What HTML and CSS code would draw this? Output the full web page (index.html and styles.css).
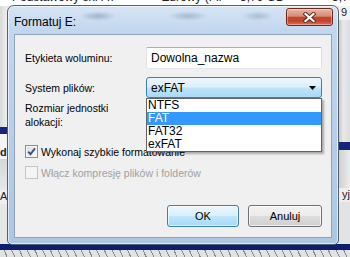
FILE: index.html
```html
<!DOCTYPE html>
<html lang="pl">
<head>
    <meta charset="UTF-8">
    <title>Formatuj E:</title>
    <link rel="stylesheet" href="styles.css">
</head>
<body>
    <div class="desk">
        <div class="desk-top">
            <div class="desk-row">
                <span class="cell c1">Podstawowy</span>
                <span class="cell c2">exFAT</span>
                <span class="cell c3">Zdrowy (Fil</span>
                <span class="cell c4">3,79 GB</span>
                <span class="cell c5">3,7</span>
            </div>
        </div>
        <div class="desk-mid">
            <div class="side side-left">
                <div class="seg seg-light"></div>
                <div class="seg seg-navy"></div>
                <div class="seg seg-white"></div>
                <div class="seg seg-bold">d</div>
                <div class="seg seg-grey"></div>
                <div class="seg seg-text">A</div>
                <div class="seg seg-grey2"></div>
            </div>
            <div class="side side-right">
                <div class="seg seg-nine">9</div>
                <div class="seg seg-rgrey"></div>
                <div class="seg seg-rnavy"></div>
                <div class="seg seg-rgrey2"></div>
                <div class="seg seg-yj">yj</div>
                <div class="seg seg-rgrey3"></div>
            </div>
        </div>
        <div class="desk-navy"></div>
        <div class="desk-hatch"></div>
    </div>

    <div class="window">
        <div class="titlebar">
            <span class="title">Formatuj E:</span>
            <button class="close-btn" aria-label="Zamknij">
                <svg width="13" height="11" viewBox="0 0 13 11">
                    <path d="M2.5 2 L10.5 9 M10.5 2 L2.5 9" stroke="#5a2a20" stroke-width="4" stroke-linecap="square"/>
                    <path d="M2.5 2 L10.5 9 M10.5 2 L2.5 9" stroke="#fff" stroke-width="2.2" stroke-linecap="square"/>
                </svg>
            </button>
        </div>

        <div class="panel">
            <div class="form-grid">
                <label class="lbl">Etykieta woluminu:</label>
                <div class="textbox">Dowolna_nazwa</div>

                <label class="lbl">System plików:</label>
                <div class="combo-cell">
                    <div class="combo combo-active">
                        <span>exFAT</span>
                        <svg width="7" height="4" viewBox="0 0 7 4"><path d="M0 0 H7 L3.5 4 Z" fill="#000"/></svg>
                    </div>
                    <ul class="droplist">
                        <li>NTFS</li>
                        <li class="selected">FAT</li>
                        <li>FAT32</li>
                        <li>exFAT</li>
                    </ul>
                </div>

                <label class="lbl lbl-two">Rozmiar jednostki<br>alokacji:</label>
                <div class="combo combo-plain">
                    <span>4096 bajtów</span>
                </div>
            </div>

            <div class="check-row">
                <span class="checkbox">
                    <svg width="11" height="11" viewBox="0 0 11 11"><path d="M2.2 5.6 L4.5 8.2 L9 2.4" stroke="#3c5088" stroke-width="1.9" fill="none"/></svg>
                </span>
                <span class="check-label">Wykonaj szybkie formatowanie</span>
            </div>
            <div class="check-row check-row-disabled">
                <span class="checkbox checkbox-disabled"></span>
                <span class="check-label">Włącz kompresję plików i folderów</span>
            </div>

            <div class="buttons">
                <button class="btn btn-default">OK</button>
                <button class="btn">Anuluj</button>
            </div>
        </div>
    </div>
</body>
</html>
```

FILE: styles.css
```css
* {
    box-sizing: border-box;
}
body {
    margin: 0;
    width: 350px;
    height: 257px;
    overflow: hidden;
    position: relative;
    font-family: "Liberation Sans", Arial, sans-serif;
    background-color: #e4e4e4;
}

/* explorer window behind the dialog */
.desk-top {
    height: 6px;
    background-color: #fff;
    overflow: hidden;
    font-size: 12px;
    line-height: 12px;
    color: #222;
    white-space: nowrap;
}
.desk-row {
    display: flex;
    margin-top: -9px;
}
.c1 { margin-left: 12px; width: 70px; }
.c2 { width: 80px; }
.c3 { width: 78px; }
.c4 { width: 92px; }
.desk-mid {
    height: 238px;
    display: flex;
    justify-content: space-between;
}
.side {
    display: flex;
    flex-direction: column;
    font-size: 11px;
    line-height: 12px;
    color: #222;
    overflow: hidden;
}
.side-left { width: 7px; }
.side-right { width: 11px; }
.seg-light { height: 121px; background: linear-gradient(90deg, #d9d9d9, #eeeeee); }
.seg-navy { height: 7px; background-color: #17237c; }
.seg-white { height: 12px; background-color: #f4f4f4; }
.seg-bold { height: 13px; font-weight: bold; background-color: #f4f4f4; }
.seg-grey { height: 31px; background: linear-gradient(180deg, #d6d6d6, #e8e8e8); }
.seg-text { height: 14px; background-color: #eee; }
.seg-grey2 { flex: 1; background-color: #e6e6e6; }
.seg-nine { height: 14px; background-color: #f3f3f3; padding-left: 2px; }
.seg-rgrey { height: 122px; background: linear-gradient(90deg, #c9c9c9, #e9e9e9 40%, #dcdcdc); }
.seg-rnavy { height: 8px; background-color: #17237c; }
.seg-rgrey2 { height: 38px; background: linear-gradient(90deg, #d0d0d0, #ececec); }
.seg-yj { height: 14px; background-color: #efefef; padding-left: 3px; }
.seg-rgrey3 { flex: 1; background-color: #e3e3e3; }
.desk-navy {
    height: 6px;
    background-color: #0f1d6e;
}
.desk-hatch {
    height: 7px;
    background: repeating-linear-gradient(65deg, #e2e2e2 0 6px, #8a8a8a 6px 7px);
}

/* dialog */
.window {
    position: absolute;
    left: 7px;
    top: 5px;
    width: 332px;
    height: 240px;
    border: 1px solid #4f6078;
    border-radius: 7px 7px 5px 5px;
    background:
        radial-gradient(ellipse 18px 5px at 90px 10px, rgba(80, 100, 130, 0.35), transparent),
        radial-gradient(ellipse 20px 5px at 180px 10px, rgba(80, 100, 130, 0.3), transparent),
        radial-gradient(ellipse 16px 5px at 250px 10px, rgba(80, 100, 130, 0.28), transparent),
        linear-gradient(180deg, #d6e5f4 0%, #c2d7ee 10%, #b9cfe8 50%, #adc6e1 100%);
    box-shadow: inset 0 0 0 1px rgba(255, 255, 255, 0.6);
    padding: 0 6px 6px;
    display: flex;
    flex-direction: column;
}
.titlebar {
    height: 28px;
    display: flex;
    justify-content: space-between;
    align-items: flex-start;
}
.title {
    font-size: 12px;
    line-height: 14px;
    margin-top: 9px;
    color: #000;
}
.close-btn {
    width: 47px;
    height: 18px;
    margin: 2px -1px 0 0;
    padding: 0;
    border: 1px solid #6b2a1e;
    border-radius: 3px;
    background: linear-gradient(180deg, #eab4a6 0%, #d98a74 45%, #c4472b 52%, #c2432a 75%, #d8745a 100%);
    box-shadow: inset 0 0 0 1px rgba(255, 255, 255, 0.35);
    display: flex;
    align-items: center;
    justify-content: center;
}
.panel {
    flex: 1;
    border: 1px solid #8da2bb;
    background-color: #f0f0f0;
    padding: 12px 9px 0 10px;
    font-size: 10.5px;
    color: #000;
}

.form-grid {
    display: grid;
    grid-template-columns: 121px 176px;
    grid-template-rows: 22px 21px 28px;
    row-gap: 8px;
    align-items: center;
}
.form-grid .lbl-two {
    line-height: 14px;
    align-self: start;
    margin-top: -5px;
}
.textbox {
    height: 22px;
    border: 1px solid #abadb3;
    border-left-color: #e2e3ea;
    border-right-color: #dbdfe6;
    border-bottom-color: #e3e9ef;
    border-radius: 2px;
    background-color: #fff;
    padding: 0 4px;
    line-height: 20px;
    font-size: 12px;
}
.combo-cell {
    position: relative;
    height: 21px;
}
.combo {
    height: 21px;
    border-radius: 3px;
    padding: 0 5px 0 4px;
    display: flex;
    align-items: center;
    justify-content: space-between;
    font-size: 12px;
}
.combo-active {
    border: 1px solid #3c7fb1;
    background: linear-gradient(180deg, #ecf6fd 0%, #ddeffb 48%, #bee4fa 52%, #a9d9f5 100%);
}
.combo-plain {
    border: 1px solid #707070;
    background: linear-gradient(180deg, #f2f2f2, #dcdcdc);
}
.droplist {
    position: absolute;
    top: 21px;
    left: 0;
    width: 176px;
    margin: 0;
    padding: 0;
    list-style: none;
    background-color: #fff;
    border: 1px solid #646464;
    box-shadow: 2px 2px 2px rgba(0, 0, 0, 0.3);
    font-size: 12px;
    z-index: 2;
}
.droplist li {
    height: 13px;
    line-height: 13px;
    padding-left: 1px;
}
.droplist .selected {
    background-color: #3399ff;
    color: #fff;
}

.check-row {
    display: flex;
    align-items: center;
    gap: 3px;
    height: 13px;
    margin-top: 11px;
}
.check-row-disabled {
    margin-top: 8px;
    color: #a0a0a0;
}
.checkbox {
    width: 13px;
    height: 13px;
    border: 1px solid #8e8f8f;
    background: linear-gradient(135deg, #dcdcdc, #fdfdfd);
    box-shadow: inset 0 0 0 1px #f4f4f4;
    display: flex;
    align-items: center;
    justify-content: center;
}
.checkbox-disabled {
    border-color: #c4c4c4;
    background: #f4f4f4;
    box-shadow: none;
}

.buttons {
    display: flex;
    justify-content: flex-end;
    gap: 9px;
    margin-top: 26px;
}
.btn {
    width: 74px;
    height: 22px;
    border: 1px solid #707070;
    border-radius: 3px;
    background: linear-gradient(180deg, #f2f2f2 0%, #ebebeb 48%, #dddddd 52%, #cfcfcf 100%);
    box-shadow: inset 0 0 0 1px rgba(255, 255, 255, 0.7);
    font-family: "Liberation Sans", Arial, sans-serif;
    font-size: 11px;
    color: #000;
    padding: 0;
}
.btn-default {
    width: 72px;
    border-color: #3c7fb1;
    background: linear-gradient(180deg, #eaf6fd 0%, #d9f0fc 48%, #bee6fd 52%, #a7d9f5 100%);
    box-shadow: inset 0 0 0 1px rgba(255, 255, 255, 0.6);
}
```
